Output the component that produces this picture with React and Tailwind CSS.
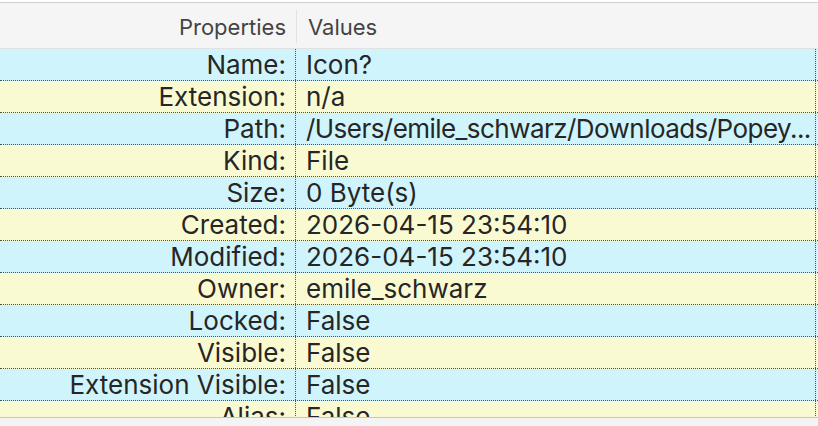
import React from "react";

const rows = [
  ["Name:", "Icon?"],
  ["Extension:", "n/a"],
  ["Path:", "/Users/emile_schwarz/Downloads/Popey..."],
  ["Kind:", "File"],
  ["Size:", "0 Byte(s)"],
  ["Created:", "2026-04-15 23:54:10"],
  ["Modified:", "2026-04-15 23:54:10"],
  ["Owner:", "emile_schwarz"],
  ["Locked:", "False"],
  ["Visible:", "False"],
  ["Extension Visible:", "False"],
  ["Alias:", "False"],
];

const App = () => {
  return (
    <div
      className="w-[818px] h-[426px] bg-[#f4f4f4] overflow-hidden"
      style={{ fontFamily: "Inter, 'Noto Sans', sans-serif" }}
    >
      <div className="h-[418px] overflow-hidden bg-white pt-[2px] border-b border-[#c6c6c6]">
        {/* Header */}
        <div className="grid grid-cols-[296px_1fr] h-[47px] bg-[#f5f5f5] border-t border-b border-t-[#d0d0d0] border-b-[#e2e2e2] text-[#444] text-[22px] leading-[32px]">
          <div className="flex items-center justify-end pr-[10px] pt-[1px] whitespace-nowrap">
            Properties
          </div>
          <div className="flex items-center pl-[11px] pt-[1px] border-l border-[#e3e3e3] my-[7px]">
            Values
          </div>
        </div>

        {/* Rows */}
        {rows.map(([prop, value], i) => (
          <div
            key={prop}
            className={`grid grid-cols-[296px_520px_1fr] h-[32px] border-b border-dotted border-[#4f4f4f] text-[#262626] text-[26px] leading-[31px] ${
              i % 2 === 0 ? "bg-[#cff4fb]" : "bg-[#fafad2]"
            }`}
          >
            <div className="flex items-center justify-end pr-[9px] border-r border-dotted border-[#4f4f4f] whitespace-nowrap">
              {prop}
            </div>
            <div className="flex items-center pl-[10px] border-r border-dotted border-[#4f4f4f] min-w-0 overflow-hidden">
              <span
                className={`whitespace-nowrap ${
                  prop === "Path:" ? "tracking-[-0.55px]" : ""
                }`}
              >
                {value}
              </span>
            </div>
            <div />
          </div>
        ))}
      </div>
    </div>
  );
};

export default App;
